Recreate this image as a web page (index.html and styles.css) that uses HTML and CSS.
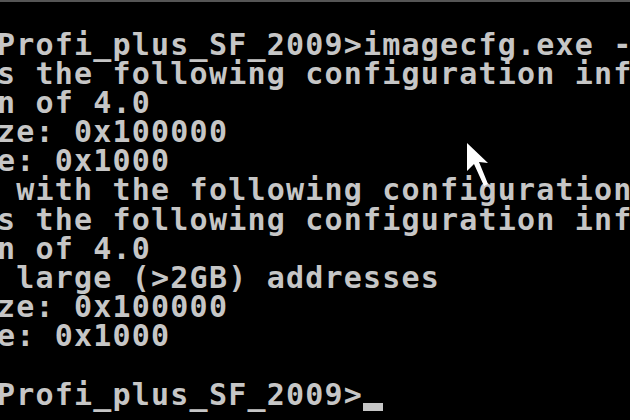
FILE: index.html
```html
<!DOCTYPE html>
<html lang="en">
<head>
    <meta charset="UTF-8">
    <title>Command Prompt</title>
    <link rel="stylesheet" href="styles.css">
</head>
<body>
    <div class="console">
        <div class="top-edge"></div>
        <pre class="output">Profi_plus_SF_2009&gt;imagecfg.exe -
s the following configuration inf
n of 4.0
ze: 0x100000
e: 0x1000
 with the following configuration
s the following configuration inf
n of 4.0
 large (&gt;2GB) addresses
ze: 0x100000
e: 0x1000

Profi_plus_SF_2009&gt;<span class="caret"></span></pre>

        <svg class="mouse" width="35" height="52" viewBox="0 0 35 52">
            <polygon points="7,5 7,33 14,26 24,48 28,46 19,24 28,25" fill="#fff"/>
        </svg>
    </div>
</body>
</html>
```

FILE: styles.css
```css
html, body {
    margin: 0;
    background: #000;
    overflow: hidden;
}

.console {
    position: relative;
    width: 630px;
    height: 420px;
    overflow: hidden;
    background: #000;
}

.top-edge {
    height: 2px;
    background: #555;
}

.output {
    margin: 0 0 0 -3px;
    padding-top: 27.5px;
    font-family: "DejaVu Sans Mono", monospace;
    font-weight: bold;
    font-size: 30px;
    letter-spacing: 1.2px;
    line-height: 29.17px;
    color: #c6c6c6;
    white-space: pre;
}

.caret {
    display: inline-block;
    width: 20px;
    height: 8px;
    margin-bottom: -6px;
    background: #c6c6c6;
}

.mouse {
    position: absolute;
    left: 460px;
    top: 138px;
}
```
